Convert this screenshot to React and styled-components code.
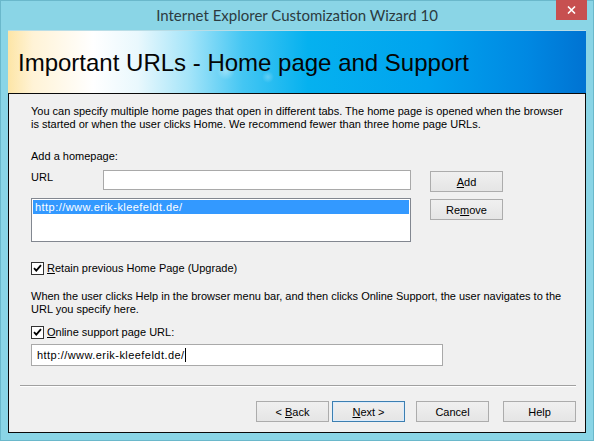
import React from "react";
import styled, { createGlobalStyle } from "styled-components";

const GlobalStyle = createGlobalStyle`
  html, body {
    margin: 0;
    padding: 0;
    background: #8cd6e6;
  }
  * {
    box-sizing: border-box;
  }
`;

const Window = styled.div`
  width: 594px;
  height: 441px;
  background: #8ad5e6;
  border: 1px solid #6ab8cb;
  display: flex;
  flex-direction: column;
  font-family: "Liberation Sans", Arial, sans-serif;
`;

const TitleBar = styled.div`
  height: 29px;
  display: grid;
  grid-template-columns: 1fr auto 1fr;
  align-items: start;
`;

const TitleText = styled.div`
  grid-column: 2;
  padding-top: 5px;
  font-family: "Lato", "Open Sans", sans-serif;
  font-size: 15px;
  color: #2c3b40;
`;

const CloseButton = styled.div`
  grid-column: 3;
  justify-self: end;
  margin-right: 6px;
  margin-top: -1px;
  width: 31px;
  height: 20px;
  background: #c75050;
  display: flex;
  align-items: center;
  justify-content: center;
`;

const Client = styled.div`
  margin: 0 7px;
  display: flex;
  flex-direction: column;
`;

const Banner = styled.div`
  height: 63px;
  border-top: 1px solid #b9dde6;
  display: flex;
  align-items: center;
  padding-left: 10px;
  background:
    radial-gradient(circle at 218px 40px, rgba(255, 255, 255, 0.35) 0, rgba(255, 255, 255, 0) 9px),
    radial-gradient(circle at 260px 46px, rgba(255, 255, 255, 0.25) 0, rgba(255, 255, 255, 0) 6px),
    linear-gradient(
      90deg,
      #fde5a6 0px,
      #fff3d6 25px,
      #ffffff 85px,
      #e9f8fd 130px,
      #a6e5f9 180px,
      #44c6f3 235px,
      #05b1ef 300px,
      #00a3ee 420px,
      #0088e2 520px,
      #0073d2 578px
    );
`;

const BannerTitle = styled.h1`
  margin: 0;
  padding-top: 2px;
  font-family: "Liberation Sans", Arial, sans-serif;
  font-weight: normal;
  font-size: 24px;
  color: #050505;
`;

const Panel = styled.div`
  height: 340px;
  background: #f0f0f0;
  border: 1px solid #0a0a0a;
  padding: 11px 0 0 22px;
  display: flex;
  flex-direction: column;
  font-size: 11px;
  line-height: 13px;
  color: #000;
`;

const Paragraph = styled.p`
  margin: 0;
  margin-top: ${(p) => p.$top || 0}px;
  width: 540px;
`;

const SectionLabel = styled.div`
  margin-top: ${(p) => p.$top || 0}px;
`;

const AddArea = styled.div`
  margin-top: 7px;
  display: grid;
  grid-template-columns: 380px 73px;
  column-gap: 19px;
`;

const LeftColumn = styled.div`
  display: flex;
  flex-direction: column;
  gap: 8px;
`;

const UrlRow = styled.div`
  display: flex;
  align-items: flex-start;
`;

const UrlLabel = styled.span`
  width: 72px;
  padding-top: 1px;
`;

const TextInput = styled.div`
  width: ${(p) => p.$width}px;
  height: ${(p) => p.$height || 20}px;
  margin-top: ${(p) => p.$top || 0}px;
  background: #fff;
  border: 1px solid #a9a9a9;
  display: flex;
  align-items: center;
  padding-left: 5px;
  font-size: 11px;
  letter-spacing: 0.45px;
`;

const Caret = styled.span`
  display: inline-block;
  width: 1px;
  height: 14px;
  background: #000;
`;

const ListBox = styled.div`
  width: 380px;
  height: 44px;
  background: #fff;
  border: 1px solid #828790;
  padding: 1px;
`;

const ListItem = styled.div`
  height: 14px;
  line-height: 14px;
  padding-left: 2px;
  letter-spacing: 0.45px;
  background: ${(p) => (p.$selected ? "#3399ff" : "transparent")};
  color: ${(p) => (p.$selected ? "#fff" : "#000")};
`;

const ButtonColumn = styled.div`
  padding-top: 1px;
  display: flex;
  flex-direction: column;
  gap: 7px;
`;

const Button = styled.button`
  width: 73px;
  height: 21px;
  padding: 0;
  font-family: "Liberation Sans", Arial, sans-serif;
  font-size: 11px;
  color: #000;
  background: linear-gradient(#f0f0f0, #e5e5e5);
  border: 1px solid ${(p) => (p.$default ? "#3c7fb1" : "#acacac")};
  box-shadow: ${(p) => (p.$default ? "inset 0 0 0 1px #dcecfc" : "none")};
`;

const CheckRow = styled.label`
  margin-top: ${(p) => p.$top || 0}px;
  display: flex;
  align-items: center;
  gap: 3px;
  height: 14px;
`;

const CheckBox = styled.span`
  width: 13px;
  height: 13px;
  background: #fff;
  border: 1px solid #333;
  display: flex;
  align-items: center;
  justify-content: center;
`;

const Separator = styled.div`
  margin: 19px 0 0 -11px;
  width: 556px;
  height: 2px;
  border-top: 1px solid #a0a0a0;
  border-bottom: 1px solid #ffffff;
`;

const Footer = styled.div`
  margin-top: 14px;
  padding-left: 225px;
  display: flex;
`;

const Gap = styled.div`
  width: ${(p) => p.$w}px;
`;

const Check = () => (
  <CheckBox>
    <svg width="9" height="9" viewBox="0 0 9 9">
      <path d="M1 4.2 L3.3 6.6 L8 1.2" fill="none" stroke="#000" strokeWidth="1.8" />
    </svg>
  </CheckBox>
);

export default function App() {
  return (
    <>
      <GlobalStyle />
      <Window>
        <TitleBar>
          <TitleText>Internet Explorer Customization Wizard 10</TitleText>
          <CloseButton>
            <svg width="9" height="8" viewBox="0 0 9 8">
              <path d="M1 0.5 L8 7.5 M8 0.5 L1 7.5" stroke="#fff" strokeWidth="1.6" />
            </svg>
          </CloseButton>
        </TitleBar>
        <Client>
          <Banner>
            <BannerTitle>Important URLs - Home page and Support</BannerTitle>
          </Banner>
          <Panel>
            <Paragraph>
              You can specify multiple home pages that open in different tabs. The home page is opened when the browser
              is started or when the user clicks Home. We recommend fewer than three home page URLs.
            </Paragraph>
            <SectionLabel $top={19}>Add a homepage:</SectionLabel>
            <AddArea>
              <LeftColumn>
                <UrlRow>
                  <UrlLabel>URL</UrlLabel>
                  <TextInput $width={308} />
                </UrlRow>
                <ListBox>
                  <ListItem $selected>http://www.erik-kleefeldt.de/</ListItem>
                </ListBox>
              </LeftColumn>
              <ButtonColumn>
                <Button>
                  <u>A</u>dd
                </Button>
                <Button>
                  Re<u>m</u>ove
                </Button>
              </ButtonColumn>
            </AddArea>
            <CheckRow $top={19}>
              <Check />
              <span>
                <u>R</u>etain previous Home Page (Upgrade)
              </span>
            </CheckRow>
            <Paragraph $top={15}>
              When the user clicks Help in the browser menu bar, and then clicks Online Support, the user navigates to the
              URL you specify here.
            </Paragraph>
            <CheckRow $top={9}>
              <Check />
              <span>
                <u>O</u>nline support page URL:
              </span>
            </CheckRow>
            <TextInput $width={412} $height={22} $top={5}>
              http://www.erik-kleefeldt.de/
              <Caret />
            </TextInput>
            <Separator />
            <Footer>
              <Button>
                &lt; <u>B</u>ack
              </Button>
              <Gap $w={3} />
              <Button $default>
                <u>N</u>ext &gt;
              </Button>
              <Gap $w={11} />
              <Button>Cancel</Button>
              <Gap $w={14} />
              <Button>Help</Button>
            </Footer>
          </Panel>
        </Client>
      </Window>
    </>
  );
}
